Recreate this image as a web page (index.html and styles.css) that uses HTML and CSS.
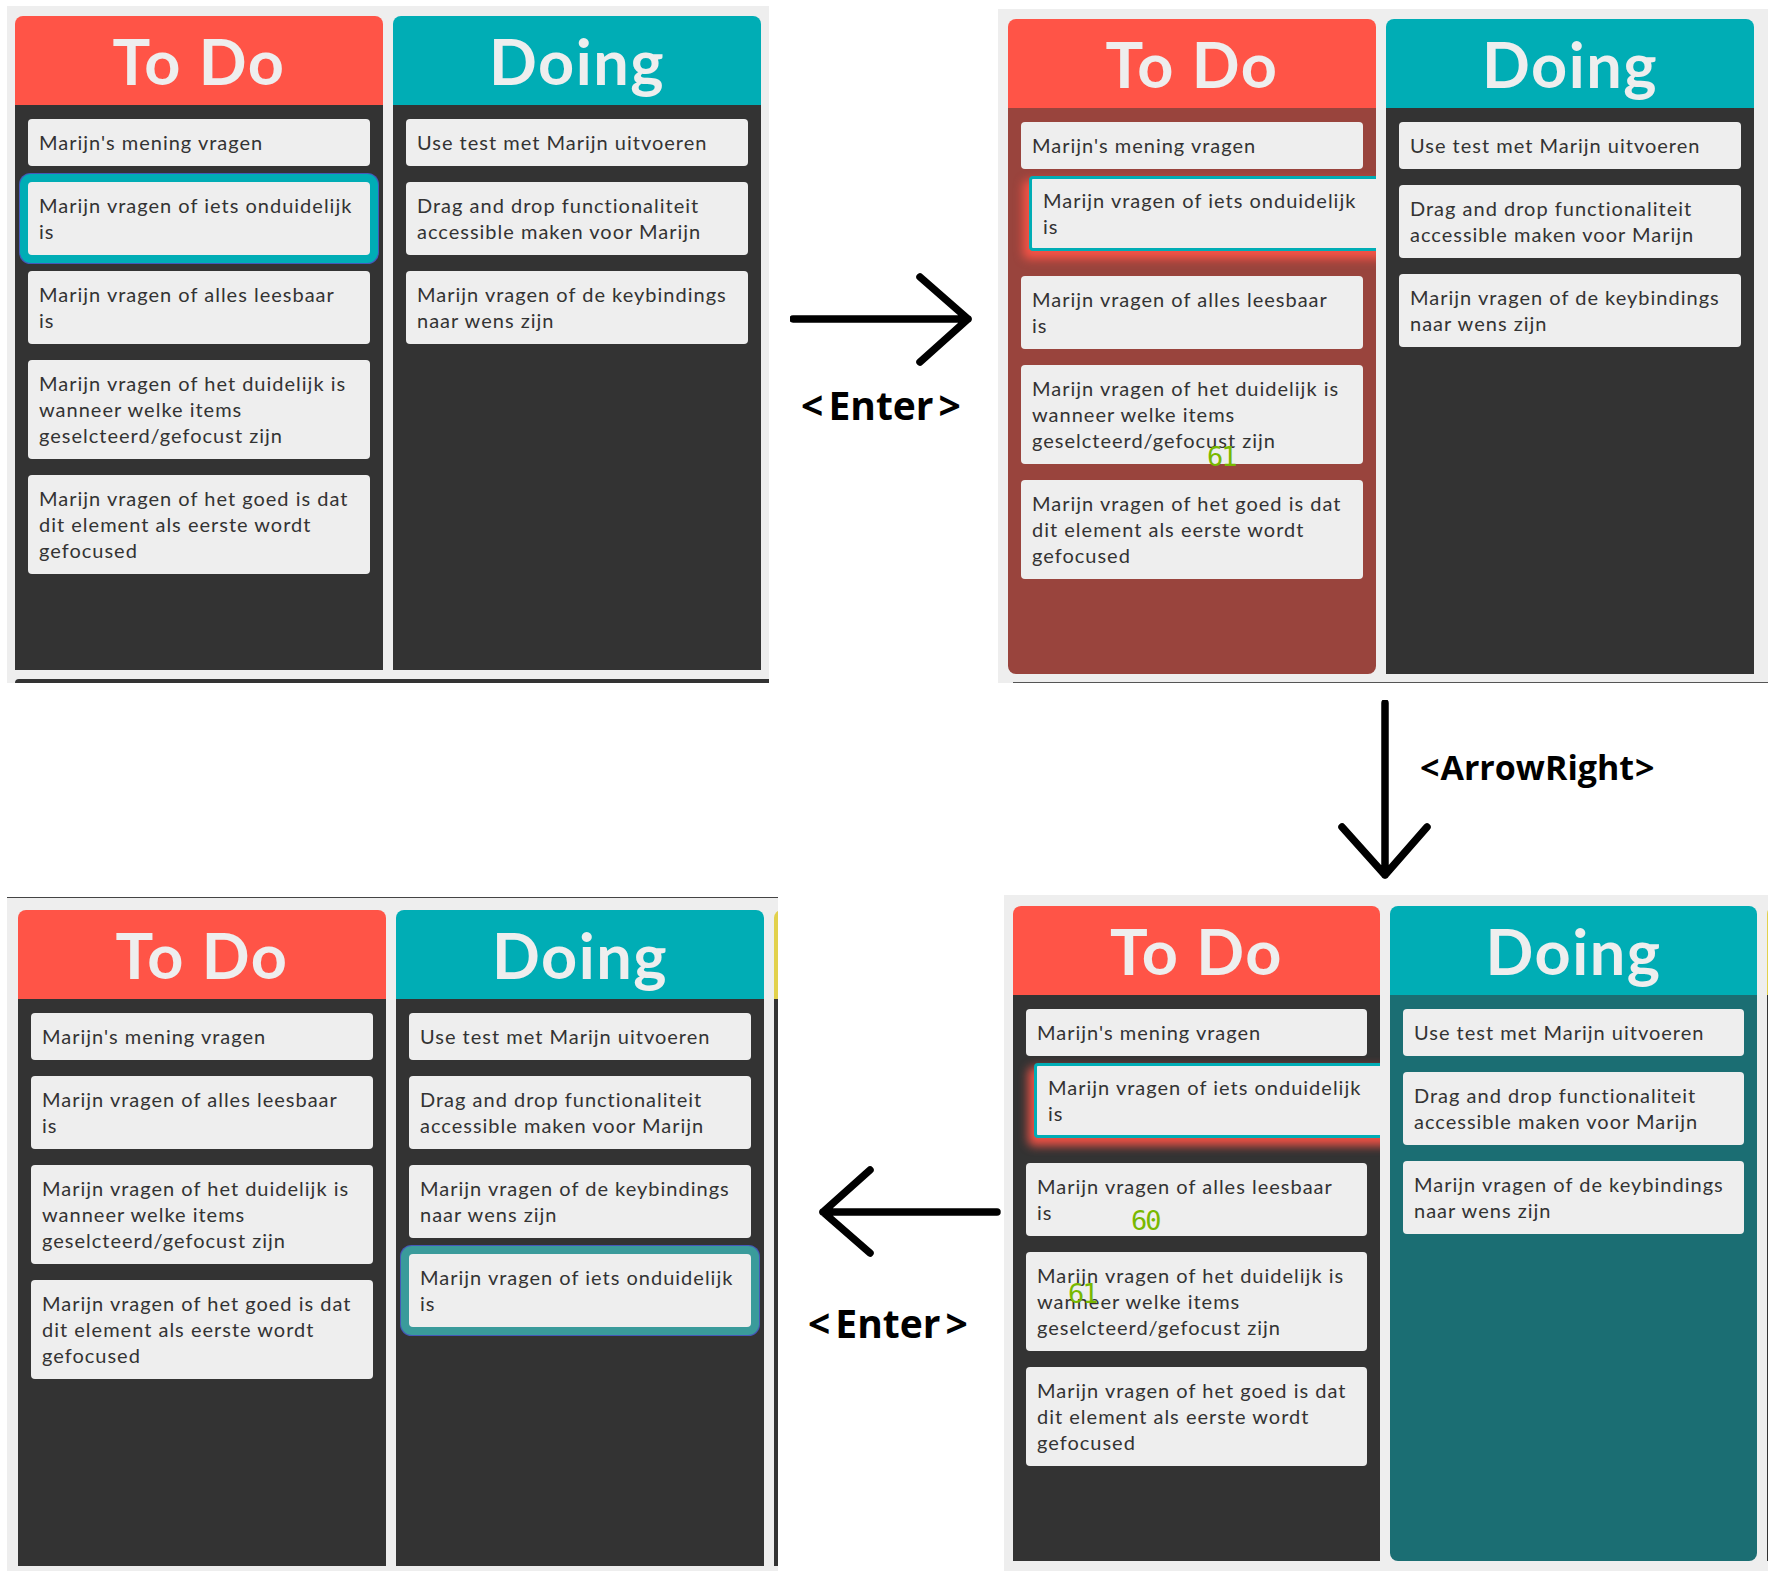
FILE: index.html
```html
<!DOCTYPE html>
<html lang="nl">
<head>
	<meta charset="UTF-8">
	<title>Toetsenbord bediening kanban</title>
	<link rel="stylesheet" href="styles.css">
</head>
<body>
<div class="sheet">

	<div class="row">
		<!-- 1) kaart heeft focus -->
		<div class="shot s1">
			<div class="board">
				<div class="col">
					<h2 class="head todo">To Do</h2>
					<div class="list">
						<div class="card">Marijn's mening vragen</div>
						<div class="card focus">Marijn vragen of iets onduidelijk<br>is</div>
						<div class="card">Marijn vragen of alles leesbaar<br>is</div>
						<div class="card">Marijn vragen of het duidelijk is<br>wanneer welke items<br>geselcteerd/gefocust zijn</div>
						<div class="card">Marijn vragen of het goed is dat<br>dit element als eerste wordt<br>gefocused</div>
					</div>
				</div>
				<div class="col">
					<h2 class="head doing">Doing</h2>
					<div class="list">
						<div class="card">Use test met Marijn uitvoeren</div>
						<div class="card">Drag and drop functionaliteit<br>accessible maken voor Marijn</div>
						<div class="card">Marijn vragen of de keybindings<br>naar wens zijn</div>
					</div>
				</div>
			</div>
			<div class="next"></div>
		</div>

		<div class="step s-enter">
			<svg class="arrow" width="182" height="96" viewBox="0 0 182 96">
				<path d="M3 47H178M130 5L178 47L130 90"/>
			</svg>
			<div class="key"><span>&lt;</span>Enter<span>&gt;</span></div>
		</div>

		<!-- 2) kaart opgepakt -->
		<div class="shot s2">
			<div class="board">
				<div class="col drop red">
					<h2 class="head todo">To Do</h2>
					<div class="list">
						<div class="card">Marijn's mening vragen</div>
						<div class="card lift">Marijn vragen of iets onduidelijk<br>is</div>
						<div class="card">Marijn vragen of alles leesbaar<br>is</div>
						<div class="card">Marijn vragen of het duidelijk is<br>wanneer welke items<br>geselcteerd/gefocust zijn</div>
						<div class="card">Marijn vragen of het goed is dat<br>dit element als eerste wordt<br>gefocused</div>
					</div>
				</div>
				<div class="col">
					<h2 class="head doing">Doing</h2>
					<div class="list">
						<div class="card">Use test met Marijn uitvoeren</div>
						<div class="card">Drag and drop functionaliteit<br>accessible maken voor Marijn</div>
						<div class="card">Marijn vragen of de keybindings<br>naar wens zijn</div>
					</div>
				</div>
			</div>
			<div class="next thin"></div>
			<span class="fps" style="left:209px;top:434px">61</span>
		</div>
	</div>

	<div class="mid">
		<svg class="arrow" width="96" height="180" viewBox="0 0 96 180">
			<path d="M48 3V175M5 127L48 175L90 127"/>
		</svg>
		<div class="key"><span>&lt;</span>ArrowRight<span>&gt;</span></div>
	</div>

	<div class="row">
		<!-- 4) kaart verplaatst -->
		<div class="shot s3">
			<div class="board">
				<div class="col">
					<h2 class="head todo">To Do</h2>
					<div class="list">
						<div class="card">Marijn's mening vragen</div>
						<div class="card">Marijn vragen of alles leesbaar<br>is</div>
						<div class="card">Marijn vragen of het duidelijk is<br>wanneer welke items<br>geselcteerd/gefocust zijn</div>
						<div class="card">Marijn vragen of het goed is dat<br>dit element als eerste wordt<br>gefocused</div>
					</div>
				</div>
				<div class="col">
					<h2 class="head doing">Doing</h2>
					<div class="list">
						<div class="card">Use test met Marijn uitvoeren</div>
						<div class="card">Drag and drop functionaliteit<br>accessible maken voor Marijn</div>
						<div class="card">Marijn vragen of de keybindings<br>naar wens zijn</div>
						<div class="card focus dim">Marijn vragen of iets onduidelijk<br>is</div>
					</div>
				</div>
				<div class="col">
					<h2 class="head done">Done</h2>
					<div class="list"></div>
				</div>
			</div>
		</div>

		<div class="step s-back">
			<svg class="arrow" width="182" height="94" viewBox="0 0 182 94">
				<path d="M178 47H4M51 5L4 47L51 88"/>
			</svg>
			<div class="key"><span>&lt;</span>Enter<span>&gt;</span></div>
		</div>

		<!-- 3) boven Doing -->
		<div class="shot s4">
			<div class="board">
				<div class="col">
					<h2 class="head todo">To Do</h2>
					<div class="list">
						<div class="card">Marijn's mening vragen</div>
						<div class="card lift">Marijn vragen of iets onduidelijk<br>is</div>
						<div class="card">Marijn vragen of alles leesbaar<br>is</div>
						<div class="card">Marijn vragen of het duidelijk is<br>wanneer welke items<br>geselcteerd/gefocust zijn</div>
						<div class="card">Marijn vragen of het goed is dat<br>dit element als eerste wordt<br>gefocused</div>
					</div>
				</div>
				<div class="col drop teal">
					<h2 class="head doing">Doing</h2>
					<div class="list">
						<div class="card">Use test met Marijn uitvoeren</div>
						<div class="card">Drag and drop functionaliteit<br>accessible maken voor Marijn</div>
						<div class="card">Marijn vragen of de keybindings<br>naar wens zijn</div>
					</div>
				</div>
				<div class="col">
					<h2 class="head done">Done</h2>
					<div class="list"></div>
				</div>
			</div>
			<span class="fps" style="left:127px;top:312px">60</span>
			<span class="fps" style="left:64px;top:385px">61</span>
		</div>
	</div>

</div>
</body>
</html>
```

FILE: styles.css
```css
*{box-sizing: border-box;}
body{
	margin: 0;
	background: #fff;
	font-family: "Lato", "Noto Sans", sans-serif;
}
.sheet{
	width: 1768px;
	height: 1573px;
	overflow: hidden;
}
.row{
	display: flex;
	align-items: flex-start;
}

/* screenshots */
.shot{
	background: #eee;
	overflow: hidden;
	position: relative;
	flex: none;
}
.s1{width: 762px; height: 677px; margin: 6px 0 0 7px; padding: 10px 0 0 8px;}
.s2{width: 770px; height: 674px; margin: 9px 0 0 auto; padding: 10px 0 0 10px;}
.s3{width: 771px; height: 674px; margin: 2px 0 0 7px; padding: 12px 0 0 11px; border-top: 1px solid #444;}
.s4{width: 764px; height: 676px; margin: 0 0 0 auto; padding: 11px 0 0 9px;}

.board{
	display: flex;
	gap: 10px;
}
.col{
	width: 368px;
	flex: none;
	display: flex;
	flex-direction: column;
	border-radius: 8px 8px 0 0;
	overflow: hidden;
}
.s1 .col{height: 654px;}
.s2 .col{height: 655px;}
.s3 .col{height: 656px;}
.s4 .col{height: 655px; width: 367px;}

.head{
	margin: 0;
	height: 89px;
	flex: none;
	text-align: center;
	font: 700 63px/89px "Lato", sans-serif;
	letter-spacing: 1.5px;
	color: #eee;
}
.todo{background: #ff5447;}
.doing{background: #00adb5;}
.done{background: #e2d14c;}

.list{
	flex: 1;
	background: #333;
	padding: 13.5px 13px;
	display: flex;
	flex-direction: column;
	gap: 16px;
}
.drop{border-radius: 8px;}
.red .list{background: #99443d;}
.teal .list{background: #1b6e73;}

.card{
	background: #eee;
	border-radius: 4px;
	padding: 10px 11px 11px;
	font-size: 20px;
	line-height: 26px;
	letter-spacing: 1px;
	color: #333;
	white-space: nowrap;
}
.focus{box-shadow: 0 0 0 8px #00adb5, 0 0 0 9px #4458b8;}
.focus.dim{box-shadow: 0 0 0 8px #3a9b9b, 0 0 0 9px #4458b8;}
.lift{
	border: 3px solid #00adb5;
	padding: 8px 11px 9px;
	margin-right: -40px;
	transform: translate(8px, -9px);
	box-shadow: -4px 6px 10px 2px rgba(255, 84, 71, .9);
}

.next{
	height: 4px;
	margin-top: 9px;
	background: #333;
	border-radius: 4px 0 0 0;
}
.next.thin{
	height: 1px;
	margin: 8px 0 0 5px;
	border-radius: 0;
	background: #555;
}

.fps{
	position: absolute;
	color: #78b800;
	font: 27px/1 "DejaVu Sans Mono", monospace;
	letter-spacing: -2px;
}

/* pijlen */
.arrow path{
	fill: none;
	stroke: #000;
	stroke-width: 7.5;
	stroke-linecap: round;
	stroke-linejoin: round;
}
.key{
	font: 700 39px/39px "Open Sans", sans-serif;
	color: #000;
	white-space: nowrap;
}
.key span{margin: 0 5px;}

.step{
	display: flex;
	flex-direction: column;
	flex: none;
}
.s-enter{margin: 272px 0 0 21px; align-items: center;}
.s-enter .key{margin-top: 17px;}
.s-back{margin: 270px 0 0 41px; align-items: flex-start;}
.s-back .key{margin: 44px 0 0 -16px;}

.mid{
	height: 212px;
	display: flex;
	align-items: flex-start;
}
.mid .arrow{margin: 17px 0 0 1337px; flex: none;}
.mid .key{margin: 67px 0 0 -14px; font-size: 34px; line-height: 34px;}
.mid .key span{margin: 0 1px;}
```
